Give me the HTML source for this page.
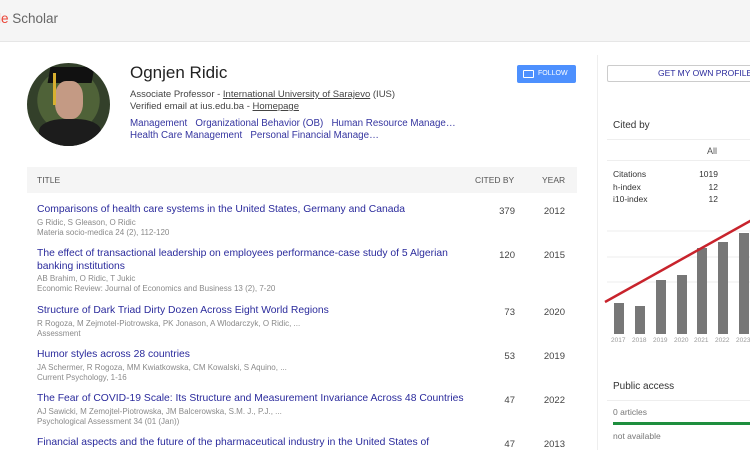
<!DOCTYPE html>
<html><head><meta charset="utf-8"><style>
*{margin:0;padding:0;box-sizing:border-box}
body{width:750px;height:450px;overflow:hidden;background:#fff;font-family:"Liberation Sans",Arial,sans-serif;position:relative;color:#222}
.abs{position:absolute;white-space:nowrap}
.hdr{position:absolute;left:0;top:0;width:750px;height:42px;background:#f5f5f5;border-bottom:1px solid #e6e6e6}
.t{color:#2a2a9c;font-size:10.35px}
.g{color:#8a8a8a;font-size:8px}
.tag{color:#3535a0;font-size:9.8px}
.num{font-size:9.5px;color:#444;text-align:right}
</style></head><body>
<div class="hdr"><div class="abs" style="left:-2px;top:11px;font-size:13.5px;color:#666"><span style="color:#ea4335">le</span> Scholar</div></div>

<div class="abs" style="left:27px;top:63px;width:83px;height:83px;border-radius:50%;background:radial-gradient(circle at 50% 45%,#c9a48c 0 18%,#4f6238 19% 50%,#33402a 51%);overflow:hidden">
<div style="position:absolute;left:22px;top:4px;width:44px;height:16px;background:#111;transform:skewX(-10deg)"></div>
<div style="position:absolute;left:28px;top:18px;width:28px;height:38px;border-radius:40%;background:#c49a84"></div>
<div style="position:absolute;left:12px;top:56px;width:62px;height:30px;background:#1c1c1c;border-radius:40% 40% 0 0"></div>
<div style="position:absolute;left:26px;top:10px;width:3px;height:32px;background:#d8b030"></div>
</div>

<div class="abs" style="left:130px;top:63px;font-size:17px;color:#222">Ognjen Ridic</div>
<div class="abs" style="left:130px;top:89px;font-size:9.5px;color:#444">Associate Professor - <u>International University of Sarajevo</u> (IUS)</div>
<div class="abs" style="left:130px;top:101px;font-size:9.5px;color:#444">Verified email at ius.edu.ba - <u>Homepage</u></div>
<div class="abs tag" style="left:130px;top:118px">Management &nbsp;&nbsp;Organizational Behavior (OB) &nbsp;&nbsp;Human Resource Manage…</div>
<div class="abs tag" style="left:130px;top:130px">Health Care Management &nbsp;&nbsp;Personal Financial Manage…</div>

<div class="abs" style="left:517px;top:65px;width:59px;height:18px;background:#4d90fe;border-radius:2px;color:#fff;font-size:7px;line-height:18px;padding-left:21px">FOLLOW
<div style="position:absolute;left:6px;top:5px;width:11px;height:8px;border:1.5px solid #fff;border-radius:1px"></div></div>

<div class="abs" style="left:27px;top:167px;width:550px;height:26px;background:#f5f5f5;font-size:8.5px;color:#555;line-height:26px">
<span style="position:absolute;left:10px">TITLE</span><span style="position:absolute;left:448px">CITED BY</span><span style="position:absolute;left:515px">YEAR</span></div>

<div class="abs t" style="left:37px;top:204px">Comparisons of health care systems in the United States, Germany and Canada</div>
<div class="abs g" style="left:37px;top:218px">G Ridic, S Gleason, O Ridic</div>
<div class="abs g" style="left:37px;top:228px">Materia socio-medica 24 (2), 112-120</div>
<div class="abs num" style="left:480px;top:206px;width:35px">379</div><div class="abs num" style="left:535px;top:206px;width:30px">2012</div>

<div class="abs t" style="left:37px;top:248px">The effect of transactional leadership on employees performance-case study of 5 Algerian</div>
<div class="abs t" style="left:37px;top:261px">banking institutions</div>
<div class="abs g" style="left:37px;top:274px">AB Brahim, O Ridic, T Jukic</div>
<div class="abs g" style="left:37px;top:284px">Economic Review: Journal of Economics and Business 13 (2), 7-20</div>
<div class="abs num" style="left:480px;top:250px;width:35px">120</div><div class="abs num" style="left:535px;top:250px;width:30px">2015</div>

<div class="abs t" style="left:37px;top:305px">Structure of Dark Triad Dirty Dozen Across Eight World Regions</div>
<div class="abs g" style="left:37px;top:319px">R Rogoza, M Zejmotel-Piotrowska, PK Jonason, A Wlodarczyk, O Ridic, ...</div>
<div class="abs g" style="left:37px;top:329px">Assessment</div>
<div class="abs num" style="left:480px;top:307px;width:35px">73</div><div class="abs num" style="left:535px;top:307px;width:30px">2020</div>

<div class="abs t" style="left:37px;top:349px">Humor styles across 28 countries</div>
<div class="abs g" style="left:37px;top:363px">JA Schermer, R Rogoza, MM Kwiatkowska, CM Kowalski, S Aquino, ...</div>
<div class="abs g" style="left:37px;top:373px">Current Psychology, 1-16</div>
<div class="abs num" style="left:480px;top:351px;width:35px">53</div><div class="abs num" style="left:535px;top:351px;width:30px">2019</div>

<div class="abs t" style="left:37px;top:393px">The Fear of COVID-19 Scale: Its Structure and Measurement Invariance Across 48 Countries</div>
<div class="abs g" style="left:37px;top:407px">AJ Sawicki, M Zemojtel-Piotrowska, JM Balcerowska, S.M. J., P.J., ...</div>
<div class="abs g" style="left:37px;top:417px">Psychological Assessment 34 (01 (Jan))</div>
<div class="abs num" style="left:480px;top:395px;width:35px">47</div><div class="abs num" style="left:535px;top:395px;width:30px">2022</div>

<div class="abs t" style="left:37px;top:437px">Financial aspects and the future of the pharmaceutical industry in the United States of</div>
<div class="abs num" style="left:480px;top:439px;width:35px">47</div><div class="abs num" style="left:535px;top:439px;width:30px">2013</div>

<div class="abs" style="left:597px;top:55px;width:1px;height:395px;background:#eee"></div>
<div class="abs" style="left:607px;top:65px;width:150px;height:17px;border:1px solid #ccc;border-radius:2px;font-size:8.5px;color:#2a2a9c;line-height:15px;padding-left:50px">GET MY OWN PROFILE</div>

<div class="abs" style="left:613px;top:120px;font-size:10px;color:#333">Cited by</div>
<div class="abs" style="left:607px;top:139px;width:143px;height:1px;background:#eee"></div>
<div class="abs" style="left:707px;top:146px;font-size:9px;color:#555">All</div>
<div class="abs" style="left:607px;top:160px;width:143px;height:1px;background:#eee"></div>
<div class="abs" style="left:613px;top:168px;font-size:8.5px;color:#333;line-height:12.5px">Citations<br>h-index<br>i10-index</div>
<div class="abs" style="left:690px;top:168px;font-size:8.5px;color:#333;line-height:12.5px;text-align:right;width:28px">1019<br>12<br>12</div>

<svg class="abs" style="left:600px;top:200px" width="150" height="150">
<g stroke="#eee" stroke-width="1"><line x1="7" y1="31" x2="150" y2="31"/><line x1="7" y1="57" x2="150" y2="57"/><line x1="7" y1="82" x2="150" y2="82"/></g>
<g fill="#777">
<rect x="14" y="103" width="10" height="31"/><rect x="35" y="106" width="10" height="28"/><rect x="56" y="80" width="10" height="54"/><rect x="77" y="75" width="10" height="59"/><rect x="97" y="48" width="10" height="86"/><rect x="118" y="42" width="10" height="92"/><rect x="139" y="33" width="10" height="101"/>
</g>
<line x1="5" y1="102" x2="152" y2="20" stroke="#c8232c" stroke-width="2.5"/>
<g font-size="6.5" fill="#999" font-family="Liberation Sans">
<text x="11" y="142">2017</text><text x="32" y="142">2018</text><text x="53" y="142">2019</text><text x="74" y="142">2020</text><text x="94" y="142">2021</text><text x="115" y="142">2022</text><text x="136" y="142">2023</text></g>
</svg>

<div class="abs" style="left:613px;top:381px;font-size:10px;color:#333">Public access</div>
<div class="abs" style="left:607px;top:400px;width:143px;height:1px;background:#eee"></div>
<div class="abs" style="left:613px;top:407px;font-size:8.5px;color:#777">0 articles</div>
<div class="abs" style="left:613px;top:422px;width:137px;height:3px;background:#1e8e3e"></div>
<div class="abs" style="left:613px;top:431px;font-size:8.5px;color:#777">not available</div>
</body></html>
